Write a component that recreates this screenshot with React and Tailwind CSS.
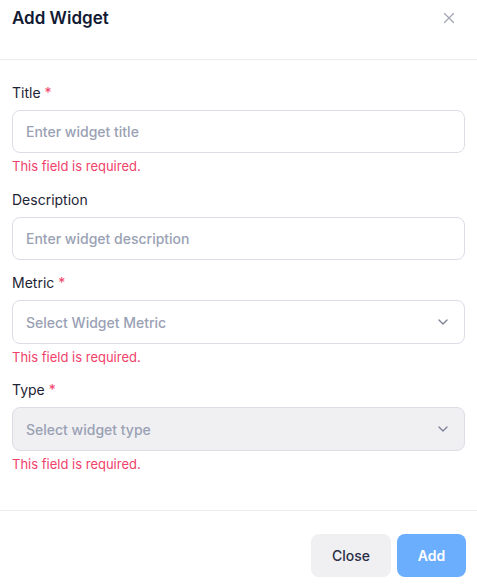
import React from "react";

const font = { fontFamily: "Inter, 'Noto Sans', sans-serif" };

function Chevron() {
  return (
    <svg width="16" height="16" viewBox="0 0 24 24" fill="none" stroke="#7b8197" strokeWidth="2" strokeLinecap="round" strokeLinejoin="round">
      <path d="M6 9l6 6 6-6" />
    </svg>
  );
}

function Label({ children, required }) {
  return (
    <label className="block text-[14px] leading-5 text-[#1e2434] mb-[7px]">
      {children}
      {required && <span className="text-[#f0416a] ml-1">*</span>}
    </label>
  );
}

function ErrorText() {
  return <p className="mt-[4px] text-[13px] leading-[18px] text-[#f0416a]">This field is required.</p>;
}

export default function App() {
  return (
    <div style={font} className="w-[477px] h-[587px] bg-white flex flex-col">
      {/* header */}
      <div className="h-[60px] border-b border-[#ececf0] px-3 pt-[5px] flex items-start justify-between">
        <h2 className="text-[17px] leading-[26px] font-semibold text-[#121a33]">Add Widget</h2>
        <button className="mt-[7px] mr-[10px] text-[#a3a7b4]">
          <svg width="12" height="12" viewBox="0 0 12 12" fill="none" stroke="currentColor" strokeWidth="1.3" strokeLinecap="round">
            <path d="M1.5 1.5l9 9M10.5 1.5l-9 9" />
          </svg>
        </button>
      </div>

      {/* body */}
      <div className="px-3 pt-[23px] flex-1">
        <div>
          <Label required>Title</Label>
          <input
            placeholder="Enter widget title"
            className="w-full h-[43px] rounded-lg border border-[#dcdde7] px-[13px] text-[14px] font-medium placeholder:text-[#9aa1b4] outline-none"
          />
          <ErrorText />
        </div>

        <div className="mt-[15px]">
          <Label>Description</Label>
          <input
            placeholder="Enter widget description"
            className="w-full h-[43px] rounded-lg border border-[#dcdde7] px-[13px] text-[14px] font-medium placeholder:text-[#9aa1b4] outline-none"
          />
        </div>

        <div className="mt-[13px]">
          <Label required>Metric</Label>
          <div className="w-full h-[44px] rounded-lg border border-[#dcdde7] pl-[13px] pr-[13px] flex items-center justify-between">
            <span className="text-[14px] font-medium text-[#9aa1b4]">Select Widget Metric</span>
            <Chevron />
          </div>
          <ErrorText />
        </div>

        <div className="mt-[14px]">
          <Label required>Type</Label>
          <div className="w-full h-[44px] rounded-lg border border-[#dcdde7] bg-[#f0f0f3] pl-[13px] pr-[13px] flex items-center justify-between">
            <span className="text-[14px] font-medium text-[#9aa1b4]">Select widget type</span>
            <Chevron />
          </div>
          <ErrorText />
        </div>
      </div>

      {/* footer */}
      <div className="border-t border-[#ececf0] px-[11px] pt-[23px] pb-[10px] flex justify-end gap-[6px]">
        <button className="h-[43px] w-[80px] rounded-lg bg-[#f0f0f3] text-[14px] font-medium text-[#2a2f45]">Close</button>
        <button className="h-[43px] w-[69px] rounded-lg bg-[#6aaefd] text-[14px] font-semibold text-white">Add</button>
      </div>
    </div>
  );
}
